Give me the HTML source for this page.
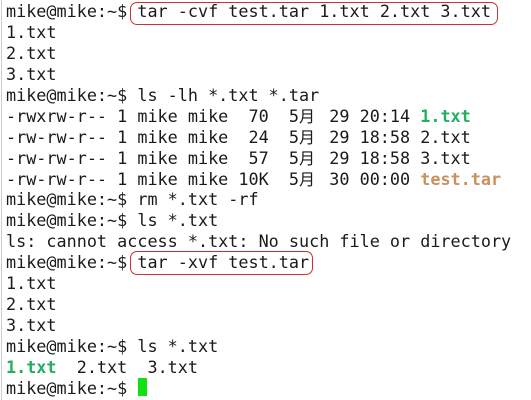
<!DOCTYPE html>
<html><head><meta charset="utf-8"><style>
html,body{margin:0;padding:0;background:#fff;width:531px;height:400px;overflow:hidden;position:relative}
.t{position:absolute;left:6px;top:1px;font-family:"DejaVu Sans Mono","Liberation Mono","Noto Sans CJK SC",monospace;font-size:16.8px;line-height:20.95px;color:#1a1a1a;white-space:pre;margin:0}
.t div{height:20.95px}
.g{color:#22b060;font-weight:bold}
.o{color:#c99060;font-weight:bold}
.m{display:inline-block;width:20.2px;font-family:"Noto Sans CJK SC",sans-serif;font-size:16px;line-height:10px}
.box{position:absolute;border:1.5px solid #d03030;border-radius:7px}
.cur{position:absolute;left:138px;top:378px;width:9px;height:18px;background:#11e011}
.lb{position:absolute;left:1px;top:0;width:1px;height:400px;background:#ccc}
</style></head><body>
<div class="lb"></div>
<div class="t"><div>mike@mike:~$ tar -cvf test.tar 1.txt 2.txt 3.txt</div><div>1.txt</div><div>2.txt</div><div>3.txt</div><div>mike@mike:~$ ls -lh *.txt *.tar</div><div>-rwxrw-r-- 1 mike mike  70  5<span class="m">月</span> 29 20:14 <span class="g">1.txt</span></div><div>-rw-rw-r-- 1 mike mike  24  5<span class="m">月</span> 29 18:58 2.txt</div><div>-rw-rw-r-- 1 mike mike  57  5<span class="m">月</span> 29 18:58 3.txt</div><div>-rw-rw-r-- 1 mike mike 10K  5<span class="m">月</span> 30 00:00 <span class="o">test.tar</span></div><div>mike@mike:~$ rm *.txt -rf</div><div>mike@mike:~$ ls *.txt</div><div>ls: cannot access *.txt: No such file or directory</div><div>mike@mike:~$ tar -xvf test.tar</div><div>1.txt</div><div>2.txt</div><div>3.txt</div><div>mike@mike:~$ ls *.txt</div><div><span class="g">1.txt</span>  2.txt  3.txt</div><div>mike@mike:~$ </div></div>
<div class="box" style="left:130px;top:2px;width:366px;height:21px"></div>
<div class="box" style="left:130px;top:251px;width:181px;height:22px"></div>
<div class="cur"></div>
</body></html>
